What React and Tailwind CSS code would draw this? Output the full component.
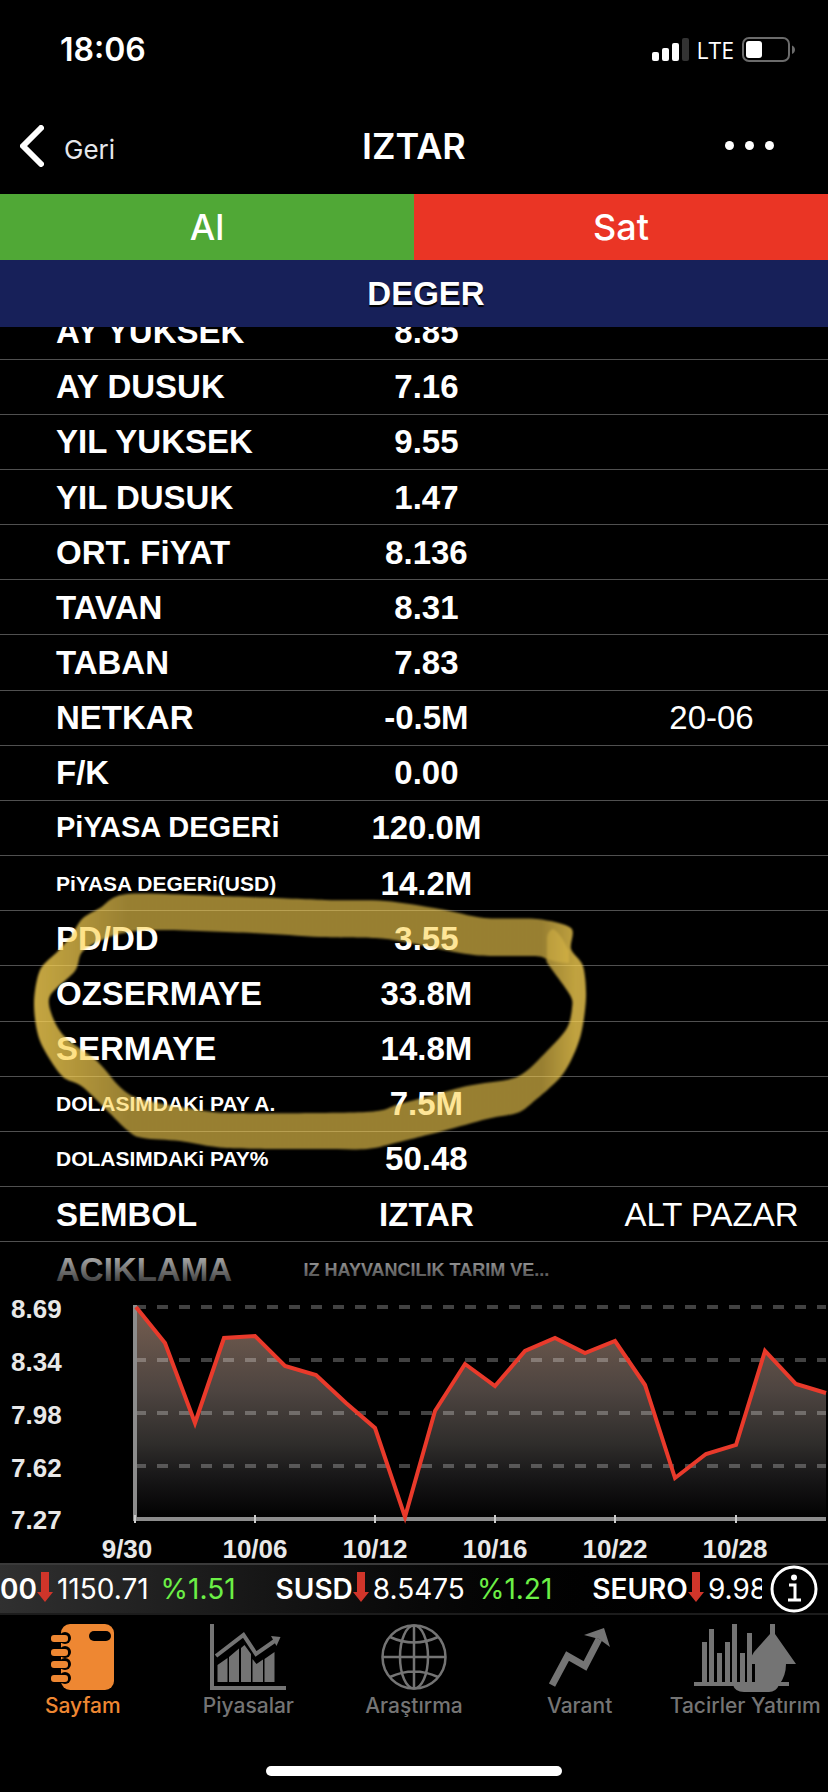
import React from 'react'

const rows = [
  { label: 'AY YUKSEK', value: '8.85' },
  { label: 'AY DUSUK', value: '7.16' },
  { label: 'YIL YUKSEK', value: '9.55' },
  { label: 'YIL DUSUK', value: '1.47' },
  { label: 'ORT. FiYAT', value: '8.136' },
  { label: 'TAVAN', value: '8.31' },
  { label: 'TABAN', value: '7.83' },
  { label: 'NETKAR', value: '-0.5M', extra: '20-06' },
  { label: 'F/K', value: '0.00' },
  { label: 'PiYASA DEGERi', value: '120.0M', size: 'text-[29px]' },
  { label: 'PiYASA DEGERi(USD)', value: '14.2M', size: 'text-[21px]' },
  { label: 'PD/DD', value: '3.55' },
  { label: 'OZSERMAYE', value: '33.8M' },
  { label: 'SERMAYE', value: '14.8M' },
  { label: 'DOLASIMDAKi PAY A.', value: '7.5M', size: 'text-[21px]' },
  { label: 'DOLASIMDAKi PAY%', value: '50.48', size: 'text-[21px]' },
  { label: 'SEMBOL', value: 'IZTAR', extra: 'ALT PAZAR' },
  { label: 'ACIKLAMA', value: 'IZ HAYVANCILIK TARIM VE...', small: true },
]

const ticker = [
  { name: '00', price: '1150.71', change: '%1.51' },
  { name: 'SUSD', price: '8.5475', change: '%1.21' },
  { name: 'SEURO', price: '9.98', change: '' },
]

const prices = [
  [136, 10], [165, 46], [195, 126], [224, 41], [255, 39], [285, 69], [316, 78],
  [346, 106], [375, 131], [405, 220], [435, 114], [465, 67], [495, 89], [525, 54],
  [555, 41], [585, 56], [615, 44], [645, 88], [675, 181], [706, 157], [736, 148],
  [765, 54], [796, 87], [826, 96],
]

const gridLines = [
  { y: 10, label: '8.69' },
  { y: 63, label: '8.34' },
  { y: 116, label: '7.98' },
  { y: 169, label: '7.62' },
  { y: 221, label: '7.27' },
]

const dates = [
  { x: 135, label: '9/30', labelX: 127 },
  { x: 255, label: '10/06', labelX: 255 },
  { x: 375, label: '10/12', labelX: 375 },
  { x: 495, label: '10/16', labelX: 495 },
  { x: 615, label: '10/22', labelX: 615 },
  { x: 736, label: '10/28', labelX: 735 },
]

const markerOuter = [
  [571, 47], [537, 38], [484, 37], [440, 28], [385, 20], [325, 19], [220, 15], [127, 13],
  [100, 27], [82, 38], [71, 55], [58, 70], [40, 89], [34, 123], [40, 160], [62, 195],
  [84, 207], [127, 249], [143, 257], [180, 260], [227, 267], [320, 268], [367, 268],
  [395, 262], [443, 250], [487, 238], [517, 232], [532, 222], [563, 193], [580, 157],
  [586, 117], [583, 85], [571, 68],
]

const markerInner = [
  [546, 78], [535, 75], [490, 75], [460, 72], [400, 60], [375, 57], [320, 56], [253, 52],
  [153, 49], [112, 55], [83, 70], [75, 90], [50, 115], [53, 137], [66, 157], [97, 180],
  [120, 206], [140, 218], [193, 228], [233, 232], [366, 231], [400, 223], [467, 205],
  [517, 196], [547, 170], [567, 147], [572, 127], [570, 114], [548, 83],
]

// closed Catmull-Rom curve through the points
const smooth = (pts) => {
  const n = pts.length
  const at = (i) => pts[(i + n) % n]
  let d = `M${pts[0][0]} ${pts[0][1]}`
  for (let i = 0; i < n; i++) {
    const [a, b, c, e] = [at(i - 1), at(i), at(i + 1), at(i + 2)]
    d += `C${b[0] + (c[0] - a[0]) / 7} ${b[1] + (c[1] - a[1]) / 7} ${c[0] - (e[0] - b[0]) / 7} ${c[1] - (e[1] - b[1]) / 7} ${c[0]} ${c[1]}`
  }
  return d + 'Z'
}

const App = () => {
  return (
    <div className="flex h-screen w-full flex-col overflow-hidden bg-black text-white font-['Liberation_Sans',Arial,sans-serif]">
      <StatusBar />

      {/* Nav */}
      <header className="grid h-[94px] shrink-0 grid-cols-3 items-center px-5 pb-[3px] font-['Inter',sans-serif]">
        <button className="flex items-center gap-5 text-[26px] text-gray-200">
          <svg width="24" height="42" viewBox="0 0 24 42" fill="none" stroke="#fff" strokeWidth="6" strokeLinecap="round" strokeLinejoin="round">
            <path d="M21 3 3 21l18 18" />
          </svg>
          <span className="pt-2">Geri</span>
        </button>
        <h1 className="text-center text-[36px] font-semibold">IZTAR</h1>
        <button aria-label="Menu" className="mr-[34px] flex gap-[11px] justify-self-end">
          <span className="size-[9px] rounded-full bg-white" />
          <span className="size-[9px] rounded-full bg-white" />
          <span className="size-[9px] rounded-full bg-white" />
        </button>
      </header>

      <div className="grid h-[66px] shrink-0 grid-cols-2 font-['Inter',sans-serif] text-[36px] font-medium">
        <button className="bg-[#50a836]">Al</button>
        <button className="bg-[#ea3525]">Sat</button>
      </div>

      <h2 className="flex h-[67px] shrink-0 items-center justify-center bg-[#172059] pl-6 text-[33px] font-bold [text-shadow:0_2px_1px_#000]">
        DEGER
      </h2>

      {/* Values, scrolled to the end */}
      <div className="relative flex min-h-0 flex-1 flex-col justify-end overflow-hidden">
        <table className="h-[993px] w-full shrink-0 table-fixed border-collapse">
          <colgroup>
            <col className="w-[35%]" />
            <col className="w-[33%]" />
            <col className="w-[32%]" />
          </colgroup>
          <tbody>
            {rows.map((row) => (
              <tr key={row.label} className="h-[55px] border-b border-[#505050] last:border-0">
                <th scope="row" className={`${row.size || 'text-[33px]'} whitespace-nowrap p-0 pl-14 text-left leading-none font-bold`}>
                  {row.label}
                </th>
                <td className={`${row.small ? 'text-[18px]' : 'text-[33px]'} whitespace-nowrap p-0 text-center leading-none font-bold`}>
                  {row.value}
                </td>
                <td className="whitespace-nowrap p-0 pl-8 text-center text-[33px] leading-none">{row.extra}</td>
              </tr>
            ))}
          </tbody>
        </table>
        <div className="pointer-events-none absolute inset-x-0 bottom-0 h-[54px] bg-linear-to-b from-black/10 to-black" />
        <Marker />
      </div>

      <Chart />
      <Ticker />
      <TabBar />
    </div>
  )
}

const StatusBar = () => (
  <div className="flex h-[100px] shrink-0 items-center justify-between pr-8 pl-[60px] font-['Inter',sans-serif]">
    <span className="text-[32px] font-semibold">18:06</span>
    <div className="flex items-center gap-2">
      <svg width="37" height="24" viewBox="0 0 37 24" fill="#fff">
        <rect x="0" y="14" width="7" height="9" rx="2" />
        <rect x="10" y="10" width="7" height="13" rx="2" />
        <rect x="20" y="5" width="7" height="18" rx="2" />
        <rect x="30" y="0" width="7" height="23" rx="2" fill="#333" />
      </svg>
      <span className="font-['Open_Sans',sans-serif] text-[23px] leading-none font-medium">LTE</span>
      <svg width="54" height="26" viewBox="0 0 54 26">
        <rect x="1" y="1" width="46" height="23" rx="6" fill="none" stroke="#6b6b6b" strokeWidth="2" />
        <rect x="4" y="4" width="16" height="17" rx="3" fill="#fff" />
        <path d="M50 8.500c4 1.500 4 7 0 8.500z" fill="#6b6b6b" />
      </svg>
    </div>
  </div>
)

const Marker = () => (
  <svg className="pointer-events-none absolute bottom-[136px] left-0" width="600" height="280" viewBox="0 0 600 280" aria-hidden="true">
    <defs>
      <linearGradient id="ink" gradientUnits="userSpaceOnUse" x1="34" y1="0" x2="586" y2="0">
        <stop offset="0" stopColor="#fdd553" stopOpacity="0.78" />
        <stop offset="0.06" stopColor="#fdd553" stopOpacity="0.72" />
        <stop offset="0.17" stopColor="#fdd553" stopOpacity="0.6" />
        <stop offset="0.92" stopColor="#fdd553" stopOpacity="0.6" />
        <stop offset="0.98" stopColor="#fdd553" stopOpacity="0.76" />
      </linearGradient>
      <filter id="soft">
        <feGaussianBlur stdDeviation="0.8" />
      </filter>
    </defs>
    <g filter="url(#soft)">
      <path d={smooth(markerOuter) + smooth(markerInner)} fill="url(#ink)" fillRule="evenodd" />
      <path d="M547 78V56q1-6 6-8 6 2 16 22v12q-12 0-22-4z" fill="#fdd553" fillOpacity="0.3" />
    </g>
  </svg>
)

const Chart = () => {
  const line = prices.map((p) => p.join(' ')).join('L')

  return (
    <svg viewBox="0 0 828 266" className="block h-auto w-full shrink-0 overflow-visible" role="img" aria-label="IZTAR">
      <defs>
        <linearGradient id="area" gradientUnits="userSpaceOnUse" x1="0" y1="10" x2="0" y2="220">
          <stop offset="0" stopColor="#765e50" />
          <stop offset="0.4" stopColor="#4d4440" />
          <stop offset="0.65" stopColor="#2f2d2b" />
          <stop offset="0.8" stopColor="#191819" />
          <stop offset="1" stopColor="#020202" />
        </linearGradient>
      </defs>
      <path d={`M${line}L826 220H136Z`} fill="url(#area)" />
      {gridLines.slice(0, 4).map((g) => (
        <path key={g.y} d={`M135 ${g.y}H826`} stroke="#fff" strokeOpacity="0.26" strokeWidth="4" strokeDasharray="11 11" />
      ))}
      <path d="M135 8V222H826" fill="none" stroke="#8c8c8c" strokeWidth="4" />
      {dates.map((d) => (
        <path key={d.x} d={`M${d.x} 218V226`} stroke="#ccc" strokeWidth="2" />
      ))}
      <path d={`M${line}`} fill="none" stroke="#e93a2b" strokeWidth="4" />
      <g fill="#e8e8e8" fontSize="26" fontWeight="700">
        {gridLines.map((g) => (
          <text key={g.label} x="11" y={g.y + 11}>{g.label}</text>
        ))}
        {dates.map((d) => (
          <text key={d.label} x={d.labelX} y="261" textAnchor="middle">{d.label}</text>
        ))}
      </g>
    </svg>
  )
}

const Ticker = () => (
  <div className="flex h-[52px] shrink-0 items-center border-t-2 border-b-2 border-t-[#3a3a3a] border-b-[#1c1c1c] bg-linear-to-r from-[#303030] to-black to-90% pr-[10px] font-['Inter',sans-serif] text-[28px]">
    <div className="flex min-w-0 flex-1 gap-10 overflow-hidden">
      {ticker.map((t) => (
        <div key={t.name} className="flex shrink-0 items-center">
          <span className="font-semibold">{t.name}</span>
          <svg width="16" height="30" viewBox="0 0 16 30" fill="#d0352a" className="mb-1">
            <path d="M4 0h8v20h4L8 30 0 20h4z" />
          </svg>
          <span className="pl-1">{t.price}</span>
          <span className="pl-3 text-[#6cf046]">{t.change}</span>
        </div>
      ))}
    </div>
    <button aria-label="Info" className="ml-2 shrink-0">
      <svg width="48" height="48" viewBox="0 0 48 48" fill="none" stroke="#fff">
        <circle cx="24" cy="24" r="22" strokeWidth="3" />
        <circle cx="24" cy="12.500" r="3" fill="#fff" stroke="none" />
        <path d="M19 20h6v15M18 35h13" strokeWidth="3" />
      </svg>
    </button>
  </div>
)

const TabBar = () => (
  <nav className="flex h-[177px] shrink-0 flex-col items-center justify-between pt-[9px] pb-4 font-['Inter',sans-serif]">
    <div className="grid w-full grid-cols-5">
      <Tab label="Sayfam" active icon={<NotebookIcon />} />
      <Tab label="Piyasalar" icon={<MarketsIcon />} />
      <Tab label="Araştırma" icon={<GlobeIcon />} />
      <Tab label="Varant" icon={<TrendIcon />} />
      <Tab label="Tacirler Yatırım" icon={<BrokerIcon />} />
    </div>
    <div className="h-[10px] w-[296px] rounded-full bg-white" />
  </nav>
)

const Tab = ({ label, icon, active }) => (
  <button className={`flex flex-col items-center text-[21px] leading-7 font-medium whitespace-nowrap ${active ? 'text-[#ee8732]' : 'text-[#747474]'}`}>
    {icon}
    <span>{label}</span>
  </button>
)

const NotebookIcon = () => (
  <svg width="63" height="68" viewBox="0 0 63 68" fill="currentColor">
    <rect x="10" y="0" width="53" height="66" rx="9" />
    <rect x="38" y="7" width="22" height="10" rx="5" fill="#000" />
    {[14, 28, 40, 54].map((y) => (
      <g key={y}>
        <circle cx="14" cy={y} r="6" fill="#000" />
        <rect x="8" y={y - 4} width="5" height="8" fill="#000" />
        <rect x="0" y={y - 3} width="17" height="7" rx="3" />
      </g>
    ))}
  </svg>
)

const MarketsIcon = () => (
  <svg width="76" height="68" viewBox="0 0 76 68" fill="currentColor">
    <path d="M0 0h4v62h72v4H0z" />
    <path d="M7.500 41l10-7v24h-10zM19 33l10-8.500V58H19zM31 24l3.500-3 6.500 9v28H31zM42.500 35l4 5 6.500-4.500V58H42.500zM54.500 35l10-7v30h-10z" />
    <path d="M6 32 33.500 11 46 30l20-14" fill="none" stroke="currentColor" strokeWidth="4" />
    <path d="M61 12l9.500 1-4 9z" />
  </svg>
)

const GlobeIcon = () => (
  <svg width="66" height="68" viewBox="0 0 66 68" fill="none" stroke="currentColor" strokeWidth="2.500">
    <circle cx="33" cy="33" r="31.500" />
    <ellipse cx="33" cy="33" rx="14" ry="31.500" />
    <path d="M33 1v64M1 33h64M9 13q24 11 48 0M9 53q24-11 48 0" />
  </svg>
)

const TrendIcon = () => (
  <svg width="62" height="68" viewBox="0 0 62 68" fill="currentColor">
    <path d="M3 61 18.500 32 36 42 50 15" fill="none" stroke="currentColor" strokeWidth="7" />
    <path d="M35 11 55 4l6 19-11-8z" />
  </svg>
)

const BrokerIcon = () => (
  <svg width="103" height="68" viewBox="0 0 103 68" fill="currentColor">
    <path d="M8 18h5v40H8zM15 5h5v53h-5zM23 29h5v29h-5zM31 18h5v40h-5zM38 0h5v58h-5zM46 29h5v29h-5zM53 9h5v49h-5z" />
    <path d="M0 58h95v4H0z" />
    <path d="M76 0h5v10l21 30H92q0 12-7 21-3 7-10 7H50q-9 0-11-7h22V40h-8l7-12 16-18z" />
  </svg>
)

export default App
